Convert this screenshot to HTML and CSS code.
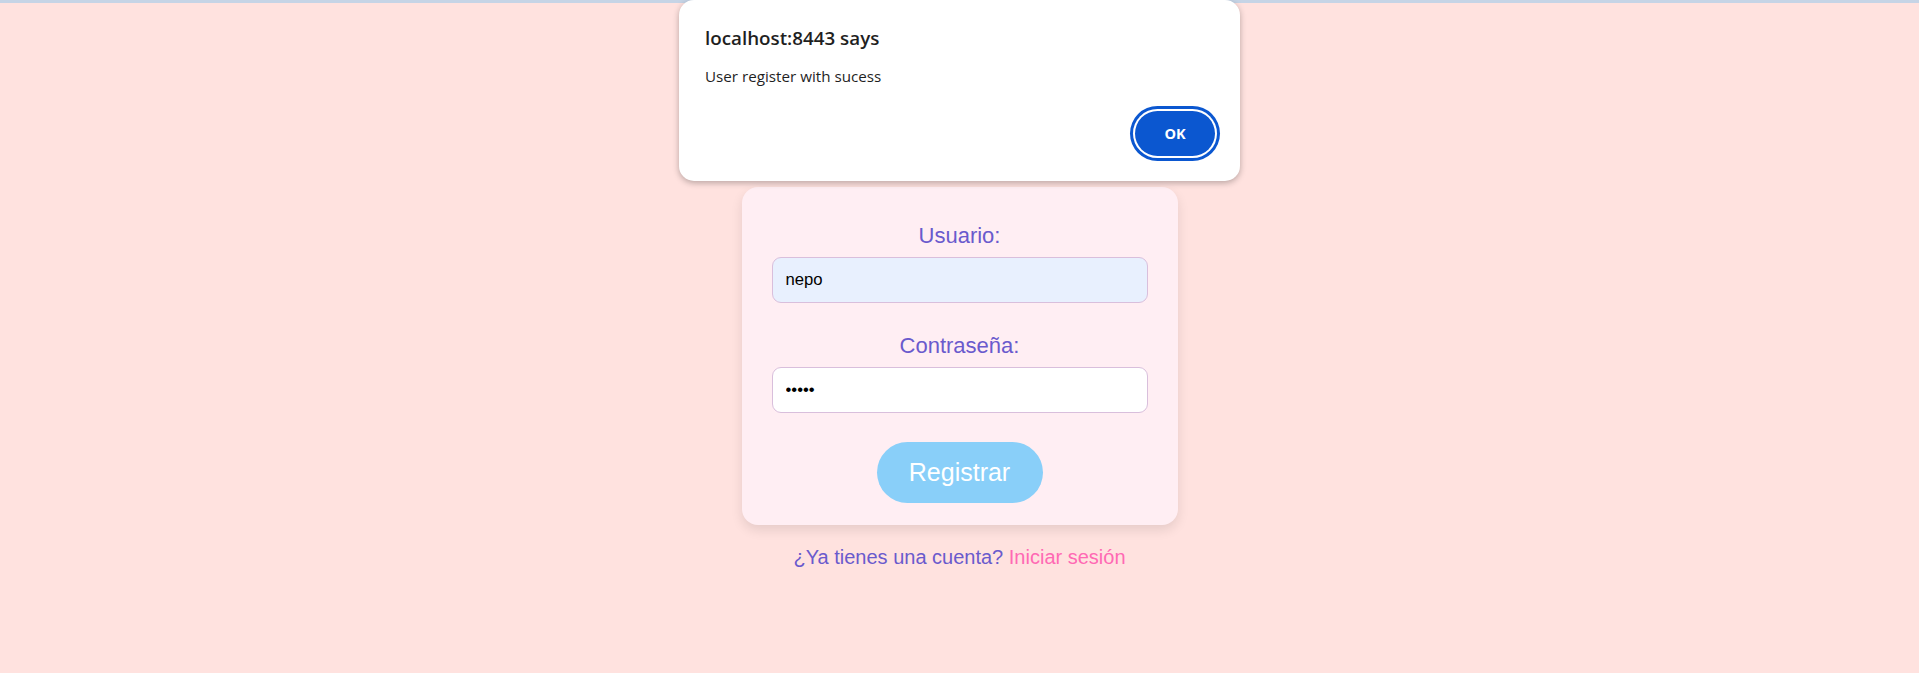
FILE: index.html
```html
<!DOCTYPE html>
<html lang="es">
<head>
<meta charset="utf-8">
<title>Registro</title>
<link rel="stylesheet" href="styles.css">
</head>
<body>
<div class="topline"></div>
<main class="page">
  <form class="card">
    <div class="field">
      <label class="label" for="user">Usuario:</label>
      <input class="input input-autofill" id="user" type="text" value="nepo">
    </div>
    <div class="field">
      <label class="label" for="pass">Contraseña:</label>
      <input class="input" id="pass" type="password" value="abcde">
    </div>
    <button class="btn-register" type="button">Registrar</button>
  </form>
  <p class="footer">¿Ya tienes una cuenta? <a class="footer-link" href="#">Iniciar sesión</a></p>
</main>
<div class="alert">
  <div class="alert-title">localhost:8443 says</div>
  <div class="alert-msg">User register with sucess</div>
  <div class="alert-actions">
    <button class="alert-ok" type="button">OK</button>
  </div>
</div>
</body>
</html>
```
FILE: styles.css
```css
html, body {
  margin: 0;
  padding: 0;
}
body {
  background: #ffe2df;
  font-family: "Liberation Sans", Arial, sans-serif;
  min-height: 673px;
}
.topline {
  height: 3px;
  background: #c6d4e6;
}
.page {
  display: flex;
  flex-direction: column;
  align-items: center;
  padding-top: 184px;
}
.card {
  box-sizing: border-box;
  width: 436px;
  padding: 36px 30px 22px;
  background: #ffeef3;
  border-radius: 16px;
  box-shadow: 0 5px 12px rgba(0, 0, 0, 0.1);
  display: flex;
  flex-direction: column;
  align-items: center;
}
.field {
  width: 100%;
  display: flex;
  flex-direction: column;
  align-items: center;
}
.field + .field {
  margin-top: 30px;
}
.label {
  display: block;
  font-size: 22px;
  line-height: 25px;
  color: #6a5acd;
  margin-bottom: 9px;
}
.input {
  box-sizing: border-box;
  width: 100%;
  height: 46px;
  padding: 0 13px;
  font-family: "Liberation Sans", Arial, sans-serif;
  font-size: 16.7px;
  color: #000;
  background: #ffffff;
  border: 1px solid #d9bfdc;
  border-radius: 9px;
  outline: none;
}
.input-autofill {
  background: #e8f0fe;
}
.btn-register {
  margin-top: 29px;
  width: 166px;
  height: 61px;
  border: none;
  border-radius: 31px;
  background: #89cff9;
  color: #ffffff;
  font-family: "Liberation Sans", Arial, sans-serif;
  font-size: 25px;
  cursor: pointer;
}
.footer {
  margin: 21px 0 0;
  font-size: 20px;
  line-height: 23px;
  color: #6a5acd;
}
.footer-link {
  color: #ff69b4;
  text-decoration: none;
}
.alert {
  position: absolute;
  top: 0;
  left: 679px;
  box-sizing: border-box;
  width: 561px;
  height: 181px;
  padding: 25px 22px 22px 26px;
  background: #ffffff;
  border-radius: 15px;
  box-shadow: 0 2px 6px rgba(0, 0, 0, 0.28);
  font-family: "Open Sans", "Noto Sans", sans-serif;
  color: #1f1f1f;
  display: flex;
  flex-direction: column;
}
.alert-title {
  font-size: 18.8px;
  font-weight: 600;
  line-height: 26px;
}
.alert-msg {
  margin-top: 14px;
  font-size: 15.2px;
  line-height: 22px;
}
.alert-actions {
  margin-top: auto;
  display: flex;
  justify-content: flex-end;
  padding: 0 3px 3px 0;
}
.alert-ok {
  width: 80px;
  height: 45px;
  border: none;
  border-radius: 23px;
  background: #0b57d0;
  color: #ffffff;
  font-family: "Open Sans", "Noto Sans", sans-serif;
  font-weight: 700;
  font-size: 14.5px;
  box-shadow: 0 0 0 2px #ffffff, 0 0 0 5px #0b57d0;
}
```
